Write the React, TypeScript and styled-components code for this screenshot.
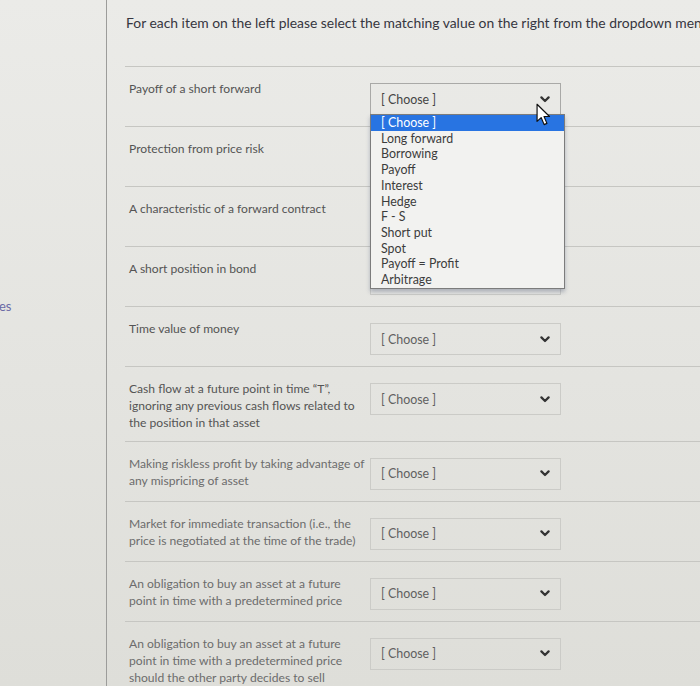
import React from 'react';
import styled, { createGlobalStyle } from 'styled-components';

const GlobalStyle = createGlobalStyle`
  html, body {
    margin: 0;
    padding: 0;
  }
  body {
    background: linear-gradient(180deg, #ebebe8 0%, #e4e4e0 55%, #deded9 100%);
    font-family: Lato, "Open Sans", sans-serif;
  }
`;

const Page = styled.div`
  display: flex;
  width: 700px;
  height: 686px;
  overflow: hidden;
`;

const Sidebar = styled.nav`
  flex: 0 0 107px;
  border-right: 1px solid #9c9c9a;
  padding-top: 298px;
  box-sizing: border-box;
`;

const NavLink = styled.span`
  display: block;
  font-size: 13px;
  line-height: 17px;
  color: #6a6aa6;
  margin-left: -1px;
`;

const Main = styled.main`
  flex: 1;
  padding-left: 18px;
  min-width: 0;
`;

const Intro = styled.p`
  margin: 0 0 34px;
  padding: 14px 0 0 1px;
  font-size: 13.9px;
  line-height: 18px;
  color: #363640;
  white-space: nowrap;
`;

const Row = styled.div`
  display: flex;
  align-items: flex-start;
  padding: 13px 0 9px 4px;
  border-top: 1px solid #c6c6c2;
`;

const Label = styled.div<{ $fade: boolean }>`
  width: 240px;
  font-size: 12.1px;
  line-height: 17.2px;
  color: ${p => (p.$fade ? '#6c6c6c' : '#545454')};
`;

const SelectWrap = styled.div`
  position: relative;
  margin: 3px 0 2px 1px;
  width: 191px;
`;

const SelectBox = styled.div<{ $open?: boolean }>`
  display: flex;
  align-items: center;
  justify-content: space-between;
  box-sizing: border-box;
  height: 32px;
  padding: 0 10px 0 10px;
  border: 1px solid ${p => (p.$open ? '#a9a9a7' : '#cbcbc7')};
  border-bottom-color: ${p => (p.$open ? 'transparent' : '#cbcbc7')};
  font-size: 12.4px;
  color: ${p => (p.$open ? '#444' : '#606060')};
`;

const Menu = styled.ul`
  position: absolute;
  z-index: 2;
  top: 31px;
  left: 0;
  width: 193px;
  margin: 0;
  padding: 0;
  list-style: none;
  background: #f2f2f0;
  border: 1px solid #7c7c7c;
  box-shadow: 0 3px 4px rgba(70, 80, 110, 0.35);
`;

const MenuItem = styled.li<{ $active?: boolean }>`
  padding-left: 10px;
  font-size: 12.4px;
  line-height: 15.7px;
  color: ${p => (p.$active ? '#ffffff' : '#3c3c3c')};
  background: ${p => (p.$active ? '#2874e2' : 'transparent')};
`;

const Pointer = styled.svg`
  position: absolute;
  z-index: 3;
  top: 20px;
  left: 166px;
`;

const Chevron = () => (
  <svg width="10" height="7" viewBox="0 0 10 7">
    <path d="M1.4 1.4 L5 5 L8.6 1.4" fill="none" stroke="#333" strokeWidth="2.2" strokeLinecap="round" strokeLinejoin="round" />
  </svg>
);

const options = [
  '[ Choose ]',
  'Long forward',
  'Borrowing',
  'Payoff',
  'Interest',
  'Hedge',
  'F - S',
  'Short put',
  'Spot',
  'Payoff = Profit',
  'Arbitrage',
];

const items = [
  'Payoff of a short forward',
  'Protection from price risk',
  'A characteristic of a forward contract',
  'A short position in bond',
  'Time value of money',
  'Cash flow at a future point in time \u201cT\u201d, ignoring any previous cash flows related to the position in that asset',
  'Making riskless profit by taking advantage of any mispricing of asset',
  'Market for immediate transaction (i.e., the price is negotiated at the time of the trade)',
  'An obligation to buy an asset at a future point in time with a predetermined price',
  'An obligation to buy an asset at a future point in time with a predetermined price should the other party decides to sell',
];

export default function App() {
  return (
    <>
      <GlobalStyle />
      <Page>
        <Sidebar>
          <NavLink>es</NavLink>
        </Sidebar>
        <Main>
          <Intro>For each item on the left please select the matching value on the right from the dropdown menu.</Intro>
          {items.map((text, i) => (
            <Row key={i}>
              <Label $fade={i >= 6}>{text}</Label>
              <SelectWrap>
                <SelectBox $open={i === 0}>
                  <span>[ Choose ]</span>
                  <Chevron />
                </SelectBox>
                {i === 0 && (
                  <>
                    <Menu>
                      {options.map((o, k) => (
                        <MenuItem key={o} $active={k === 0}>{o}</MenuItem>
                      ))}
                    </Menu>
                    <Pointer width="15" height="24" viewBox="0 0 14 22">
                      <path d="M1 1 L1 17 L4.8 13.4 L7.6 20 L10.2 18.8 L7.5 12.4 L12.6 12.4 Z" fill="#fff" stroke="#111" strokeWidth="1.1" strokeLinejoin="round" />
                    </Pointer>
                  </>
                )}
              </SelectWrap>
            </Row>
          ))}
        </Main>
      </Page>
    </>
  );
}
